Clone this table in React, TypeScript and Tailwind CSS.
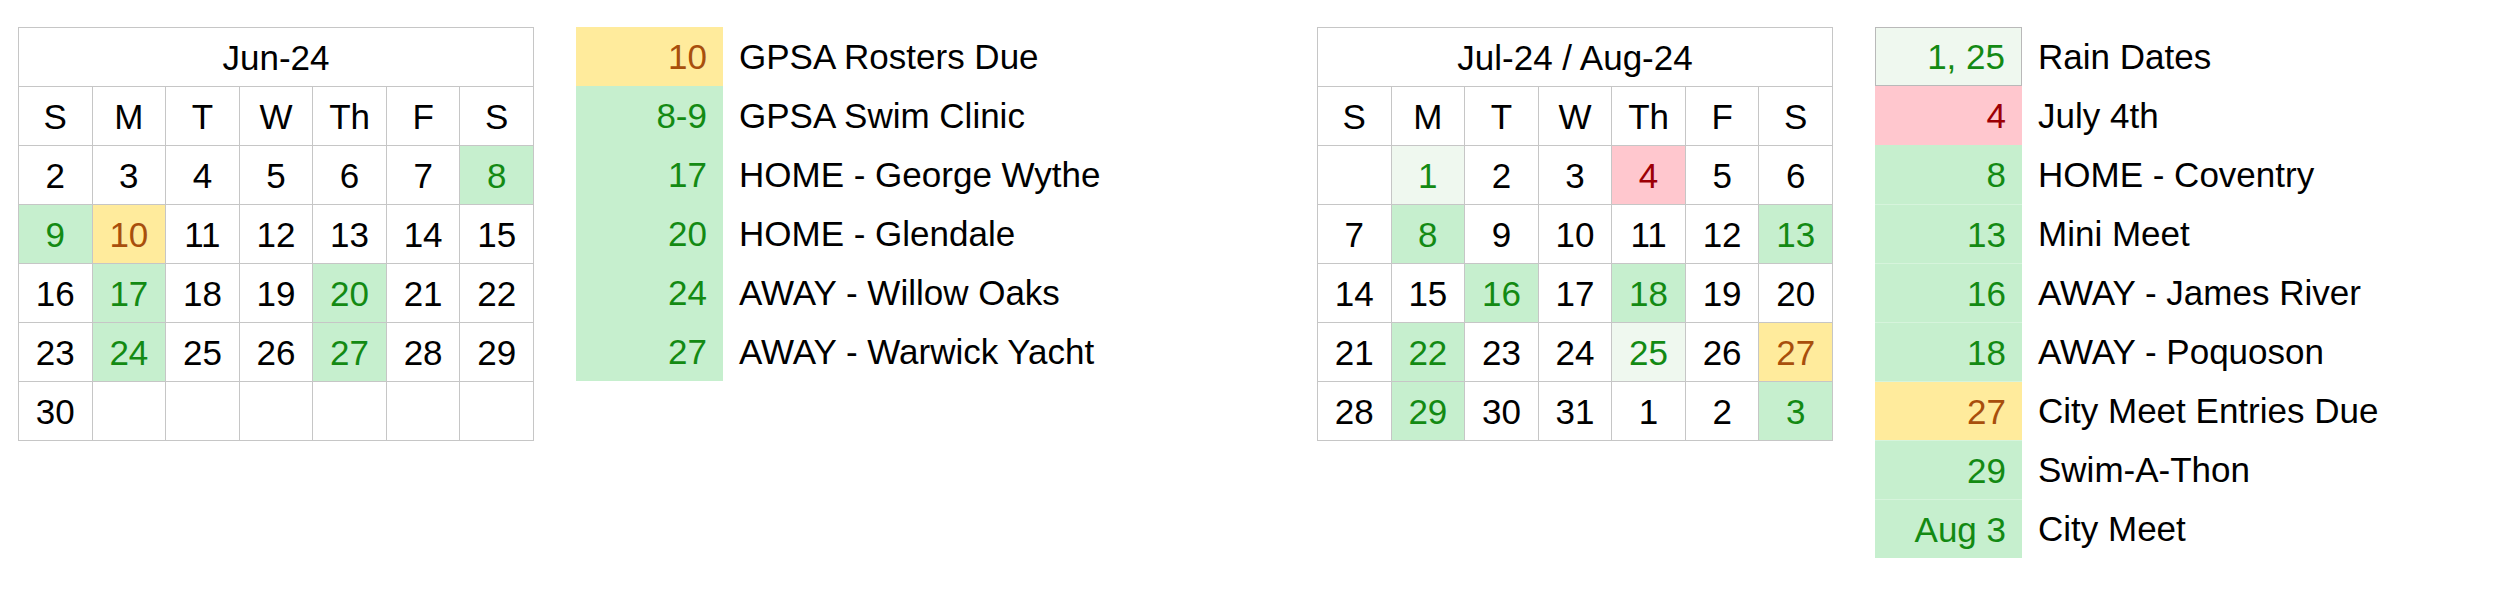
type Tone = 'g' | 'y' | 'r' | 'l';

interface Day {
  v: string;
  tone?: Tone;
}

interface Item {
  date: string;
  label: string;
  tone: Tone;
}

const bgFor: Record<Tone, string> = {
  g: 'bg-[#c6efce] text-[#138a13]',
  y: 'bg-[#ffeb9c] text-[#a84f0c]',
  r: 'bg-[#ffc7ce] text-[#9c0006]',
  l: 'bg-[#eff8ef] text-[#138a13]',
};

const dayNames = ['S', 'M', 'T', 'W', 'Th', 'F', 'S'];

const d = (v: string | number, tone?: Tone): Day => ({ v: String(v), tone });

const june: Day[] = [
  d(2), d(3), d(4), d(5), d(6), d(7), d(8, 'g'),
  d(9, 'g'), d(10, 'y'), d(11), d(12), d(13), d(14), d(15),
  d(16), d(17, 'g'), d(18), d(19), d(20, 'g'), d(21), d(22),
  d(23), d(24, 'g'), d(25), d(26), d(27, 'g'), d(28), d(29),
  d(30), d(''), d(''), d(''), d(''), d(''), d(''),
];

const julyAug: Day[] = [
  d(''), d(1, 'l'), d(2), d(3), d(4, 'r'), d(5), d(6),
  d(7), d(8, 'g'), d(9), d(10), d(11), d(12), d(13, 'g'),
  d(14), d(15), d(16, 'g'), d(17), d(18, 'g'), d(19), d(20),
  d(21), d(22, 'g'), d(23), d(24), d(25, 'l'), d(26), d(27, 'y'),
  d(28), d(29, 'g'), d(30), d(31), d(1), d(2), d(3, 'g'),
];

const juneItems: Item[] = [
  { date: '10', label: 'GPSA Rosters Due', tone: 'y' },
  { date: '8-9', label: 'GPSA Swim Clinic', tone: 'g' },
  { date: '17', label: 'HOME - George Wythe', tone: 'g' },
  { date: '20', label: 'HOME - Glendale', tone: 'g' },
  { date: '24', label: 'AWAY - Willow Oaks', tone: 'g' },
  { date: '27', label: 'AWAY - Warwick Yacht', tone: 'g' },
];

const julyItems: Item[] = [
  { date: '1, 25', label: 'Rain Dates', tone: 'l' },
  { date: '4', label: 'July 4th', tone: 'r' },
  { date: '8', label: 'HOME - Coventry', tone: 'g' },
  { date: '13', label: 'Mini Meet', tone: 'g' },
  { date: '16', label: 'AWAY - James River', tone: 'g' },
  { date: '18', label: 'AWAY - Poquoson', tone: 'g' },
  { date: '27', label: 'City Meet Entries Due', tone: 'y' },
  { date: '29', label: 'Swim-A-Thon', tone: 'g' },
  { date: 'Aug 3', label: 'City Meet', tone: 'g' },
];

function MonthGrid({ title, days }: { title: string; days: Day[] }) {
  return (
    <div className="grid w-[516px] shrink-0 grid-cols-7 border-l border-t border-[#c6c6c6]">
      <div className="col-span-7 flex h-[59px] items-center justify-center border-b border-r border-[#c6c6c6]">
        {title}
      </div>
      {dayNames.map((n, i) => (
        <div
          key={'h' + i}
          className="flex h-[59px] items-center justify-center border-b border-r border-[#c6c6c6]"
        >
          {n}
        </div>
      ))}
      {days.map((day, i) => (
        <div
          key={i}
          className={
            'flex h-[59px] items-center justify-center border-b border-r border-[#c6c6c6] ' +
            (day.tone ? bgFor[day.tone] : 'text-black')
          }
        >
          {day.v}
        </div>
      ))}
    </div>
  );
}

function Legend({ items, width, boxedFirst }: { items: Item[]; width: string; boxedFirst?: boolean }) {
  return (
    <div className={'ml-[42px] flex shrink-0 flex-col ' + width}>
      {items.map((item, i) => (
        <div key={i} className="flex h-[59px] items-center whitespace-nowrap">
          <div
            className={
              'flex h-full w-[147px] shrink-0 items-center justify-end pr-[16px] ' +
              bgFor[item.tone] +
              (boxedFirst && i === 0 ? ' border border-[#b9b9b9]' : '') +
              (boxedFirst && i > 2 ? ' border-t border-[#d6f4dc]' : '')
            }
          >
            {item.date}
          </div>
          <div className="pl-[16px] text-black">{item.label}</div>
        </div>
      ))}
    </div>
  );
}

export default function App() {
  return (
    <div
      className="flex h-[600px] w-[2520px] items-start bg-white pl-[18px] pt-[27px] text-[35px] leading-none text-black"
      style={{ fontFamily: '"Liberation Sans", Arial, Helvetica, sans-serif' }}
    >
      <MonthGrid title="Jun-24" days={june} />
      <Legend items={juneItems} width="w-[741px]" />
      <MonthGrid title="Jul-24 / Aug-24" days={julyAug} />
      <Legend items={julyItems} width="w-[600px]" boxedFirst />
    </div>
  );
}
